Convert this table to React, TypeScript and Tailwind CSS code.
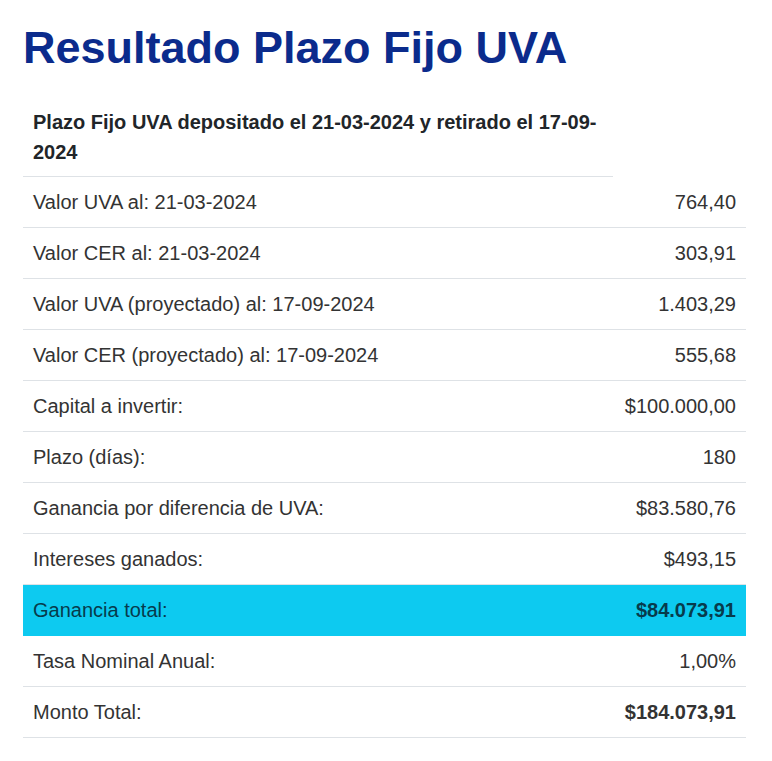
import React from "react";

interface Row {
    label: string;
    value: string;
    bold?: boolean;
    highlight?: boolean;
}

const rows: Row[] = [
    { label: "Valor UVA al: 21-03-2024", value: "764,40" },
    { label: "Valor CER al: 21-03-2024", value: "303,91" },
    { label: "Valor UVA (proyectado) al: 17-09-2024", value: "1.403,29" },
    { label: "Valor CER (proyectado) al: 17-09-2024", value: "555,68" },
    { label: "Capital a invertir:", value: "$100.000,00" },
    { label: "Plazo (días):", value: "180" },
    { label: "Ganancia por diferencia de UVA:", value: "$83.580,76" },
    { label: "Intereses ganados:", value: "$493,15" },
    { label: "Ganancia total:", value: "$84.073,91", bold: true, highlight: true },
    { label: "Tasa Nominal Anual:", value: "1,00%" },
    { label: "Monto Total:", value: "$184.073,91", bold: true },
];

const App: React.FC = () => {
    return (
        <div className="min-h-screen bg-white pl-[23px] pt-[21px] font-['Liberation_Sans',Arial,sans-serif]">
            <h1 className="text-[45px] font-bold leading-[54px] text-[#0b2b8c]">Resultado Plazo Fijo UVA</h1>

            <div className="mt-[26px] w-[723px]">
                <div className="w-[590px] border-b border-[#dee2e6] px-[10px] pt-[6px] pb-[9px] text-[20px] font-bold leading-[30px] text-[#212529]">
                    Plazo Fijo UVA depositado el 21-03-2024 y retirado el 17-09-2024
                </div>
                {rows.map((row) => (
                    <div
                        key={row.label}
                        className={
                            row.highlight
                                ? "flex h-[51px] items-center justify-between border-b border-[#0dcaf0] bg-[#0dcaf0] px-[10px] text-[20px] text-[#073b4c]"
                                : "flex h-[51px] items-center justify-between border-b border-[#dee2e6] px-[10px] text-[20px] text-[#333333]"
                        }
                    >
                        <span>{row.label}</span>
                        <span className={row.bold ? "font-bold" : ""}>{row.value}</span>
                    </div>
                ))}
            </div>
        </div>
    );
};

export default App;
